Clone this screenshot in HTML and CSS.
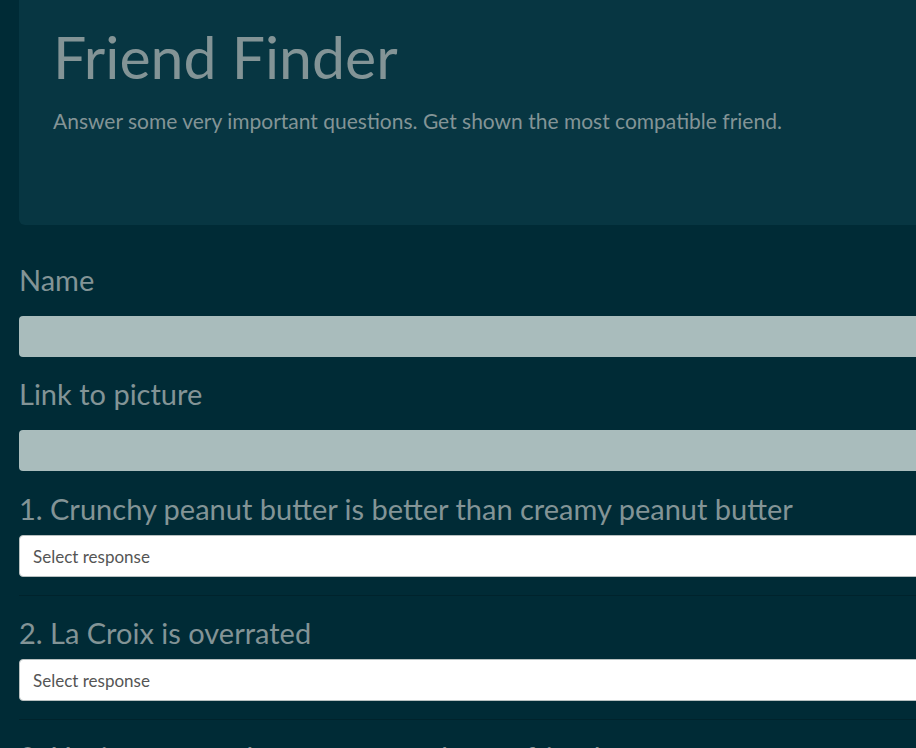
FILE: index.html
```html
<!DOCTYPE html>
<html lang="en">
<head>
<meta charset="utf-8">
<title>Friend Finder</title>
<link rel="stylesheet" href="styles.css">
</head>
<body>
<div class="container">
  <div class="jumbotron">
    <h1 class="title">Friend Finder</h1>
    <p class="lead">Answer some very important questions. Get shown the most compatible friend.</p>
  </div>
  <form class="survey">
    <div class="field">
      <label class="field-label" for="name">Name</label>
      <input class="text-input" id="name" type="text">
    </div>
    <div class="field">
      <label class="field-label" for="photo">Link to picture</label>
      <input class="text-input" id="photo" type="text">
    </div>
    <div class="question">
      <h3 class="question-label">1. Crunchy peanut butter is better than creamy peanut butter</h3>
      <select class="select-input"><option>Select response</option></select>
    </div>
    <hr class="divider">
    <div class="question">
      <h3 class="question-label">2. La Croix is overrated</h3>
      <select class="select-input"><option>Select response</option></select>
    </div>
    <hr class="divider">
    <div class="question">
      <h3 class="question-label">3. Having pets makes someone a better friend</h3>
      <select class="select-input"><option>Select response</option></select>
    </div>
  </form>
</div>
</body>
</html>
```
FILE: styles.css
```css
html, body {
  margin: 0;
  padding: 0;
  background: #002b36;
  overflow-x: hidden;
}
body {
  font-family: "Lato", "Open Sans", sans-serif;
  color: #839496;
}
.container {
  width: 1200px;
  padding-left: 19px;
}
.jumbotron {
  background: #073642;
  border-radius: 0 0 6px 6px;
  height: 225px;
  box-sizing: border-box;
  padding: 24px 36px 0 34px;
}
.title {
  margin: 0;
  font-size: 59px;
  line-height: 66px;
  font-weight: 400;
}
.lead {
  margin: 18px 0 0;
  font-size: 21px;
  line-height: 25px;
}
.survey {
  display: flex;
  flex-direction: column;
}
.field {
  display: flex;
  flex-direction: column;
}
.field-label {
  font-size: 29px;
  line-height: 32px;
  margin: 39px 0 20px;
}
.field + .field .field-label {
  margin-top: 21px;
}
.text-input {
  height: 41px;
  box-sizing: border-box;
  border: none;
  border-radius: 4px;
  background: #a9bcbc;
  width: 100%;
}
.question {
  display: flex;
  flex-direction: column;
}
.question-label {
  font-size: 29px;
  font-weight: 400;
  line-height: 32px;
  margin: 22px 0 10px;
}
.divider + .question .question-label {
  margin-top: 21px;
}
.select-input {
  height: 42px;
  box-sizing: border-box;
  border: 1px solid #b8c0c0;
  border-radius: 4px;
  background: #fff;
  color: #555;
  font-family: "Lato", "Open Sans", sans-serif;
  font-size: 17px;
  padding: 0 13px;
  width: 100%;
  appearance: none;
}
.divider {
  border: none;
  border-top: 1px solid #00232c;
  margin: 18px 0 0;
}
```
